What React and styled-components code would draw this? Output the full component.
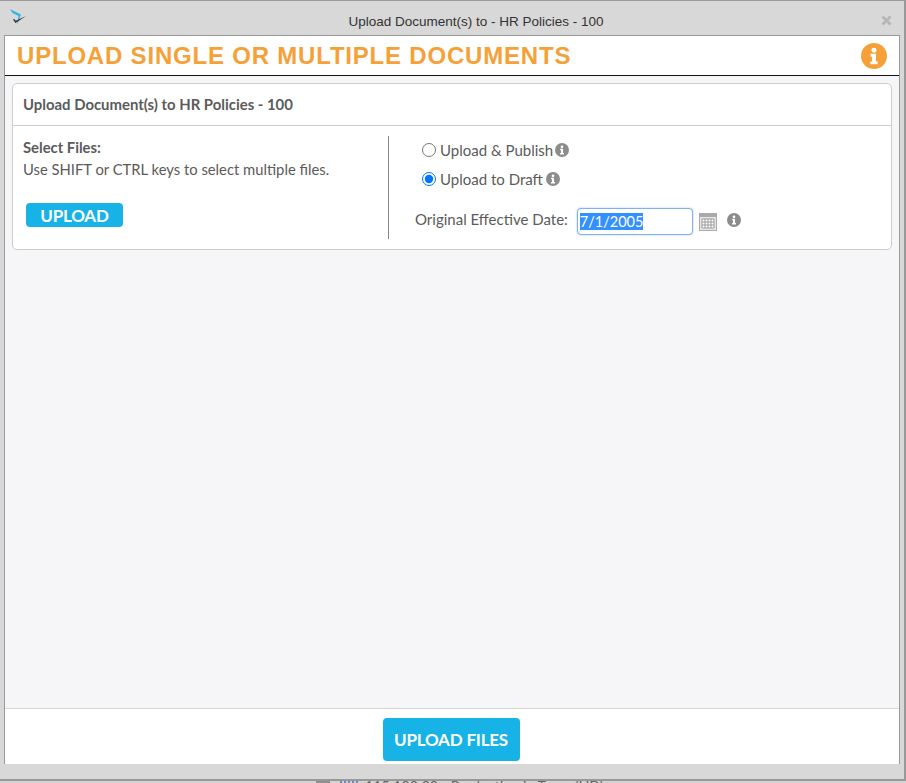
import React from 'react'
import styled, { createGlobalStyle } from 'styled-components'

const GlobalStyle = createGlobalStyle`
  html, body {
    margin: 0;
    padding: 0;
    background: #d4d4d4;
  }
  body {
    font-family: Lato, "Liberation Sans", sans-serif;
    color: #5b5b5b;
  }
`

const Page = styled.div`
  width: 906px;
  height: 783px;
  overflow: hidden;
  position: relative;
`

const Backdrop = styled.div`
  position: absolute;
  left: 316px;
  top: 777px;
  display: flex;
  align-items: flex-start;
  font-size: 14.2px;
  line-height: 18px;
  color: #666;
  white-space: nowrap;
`

const BackdropIcon = styled.svg`
  flex: none;
  margin-top: 2px;
  margin-right: ${p => p.$gap}px;
`

const Dialog = styled.div`
  box-sizing: border-box;
  width: 906px;
  height: 781px;
  position: relative;
  border-top: 1px solid #999;
  border-right: 2px solid #999;
  border-bottom: 2px solid #999;
  background: #d8d8d8;
  padding: 0 4px 15px 4px;
  display: flex;
  flex-direction: column;
`

const TitleBar = styled.div`
  height: 34px;
  flex: none;
  display: flex;
  align-items: center;
  justify-content: center;
  position: relative;
  font: 13.5px "Liberation Sans", Arial, sans-serif;
  color: #333;
  padding: 6px 0 0 48px;
  box-sizing: border-box;
`

const AppLogo = styled.svg`
  position: absolute;
  left: 5px;
  top: 7px;
`

const CloseButton = styled.svg`
  position: absolute;
  right: 8px;
  top: 14px;
`

const Body = styled.div`
  flex: 1;
  min-height: 0;
  display: flex;
  flex-direction: column;
  background: #f6f6f8;
  border: 1px solid #999;
  border-bottom: 0;
`

const Header = styled.div`
  height: 40px;
  flex: none;
  box-sizing: border-box;
  background: #fff;
  border-bottom: 1px solid #111;
  display: flex;
  align-items: center;
  justify-content: space-between;
  padding: 0 12px;
`

const Heading = styled.h1`
  margin: 0;
  font: 700 24px "Liberation Sans", Arial, sans-serif;
  letter-spacing: 0.8px;
  color: #f6a138;
`

const Content = styled.div`
  flex: 1;
  min-height: 0;
  padding: 7px 7px 0 7px;
`

const Card = styled.div`
  background: #fff;
  border: 1px solid #ccc;
  border-radius: 5px;
`

const CardTitle = styled.div`
  height: 42px;
  box-sizing: border-box;
  border-bottom: 1px solid #ccc;
  display: flex;
  align-items: center;
  padding: 0 0 2px 10px;
  font-size: 14.9px;
  font-weight: 700;
  color: #5b5b5b;
`

const CardBody = styled.div`
  display: flex;
  height: 123px;
  box-sizing: border-box;
  padding: 10px 0;
`

const LeftPane = styled.div`
  width: 376px;
  box-sizing: border-box;
  padding-left: 10px;
  border-right: 1px solid #888;
  flex: none;
`

const RightPane = styled.div`
  flex: 1;
  margin-top: -1px;
  padding-left: 33px;
`

const PaneLabel = styled.div`
  font-size: 14.8px;
  font-weight: 700;
  line-height: 21px;
  margin-top: 1px;
`

const PaneText = styled.div`
  font-size: 14.8px;
  line-height: 21px;
  padding-top: 1px;
`

const SmallButton = styled.button`
  display: block;
  margin: 23px 0 0 3px;
  width: 97px;
  height: 24px;
  border: 0;
  border-radius: 4px;
  background: #17b3e6;
  color: #fff;
  font: 700 17px Lato, sans-serif;
  letter-spacing: -0.2px;
  padding: 0;
`

const RadioRow = styled.label`
  display: flex;
  align-items: center;
  height: 29px;
  font-size: 15px;
  gap: 4px;
`

const Radio = styled.input`
  margin: 0;
  width: 14px;
  height: 14px;
`

const DateRow = styled.div`
  display: flex;
  align-items: center;
  margin: 15px 0 0 -7px;
  font-size: 15px;
`

const DateLabel = styled.span`
  padding-bottom: 5px;
`

const DateInput = styled.input`
  box-sizing: border-box;
  width: 116px;
  height: 27px;
  margin-left: 9px;
  padding: 0 2px;
  border: 1px solid #7fb2ee;
  border-radius: 4px;
  outline: none;
  box-shadow: 0 0 2px #9cc4f3;
  font: 14.5px Lato, "Liberation Sans", sans-serif;
  color: #444;
  &::selection {
    background: #3390ff;
    color: #fff;
  }
`

const CalendarIcon = styled.svg`
  margin-left: 6px;
`

const InfoDot = styled.svg`
  flex: none;
  margin-left: ${p => p.$gap || 0}px;
  margin-bottom: ${p => p.$lift || 0}px;
`

const Footer = styled.div`
  height: 56px;
  flex: none;
  box-sizing: border-box;
  background: #fff;
  border-top: 1px solid #d8d8d8;
  display: flex;
  align-items: flex-start;
  justify-content: center;
  padding: 9px 2px 0 0;
`

const PrimaryButton = styled.button`
  width: 137px;
  height: 43px;
  border: 0;
  border-radius: 4px;
  background: #17b3e6;
  color: #fff;
  font: 700 17px Lato, sans-serif;
  letter-spacing: -0.2px;
  padding: 0;
`

const InfoGlyph = ({ size, bg, gap, lift }) => (
  <InfoDot $gap={gap} $lift={lift} width={size} height={size} viewBox="0 0 24 24">
    <circle cx="12" cy="12" r="12" fill={bg} />
    <circle cx="12" cy="6.6" r="2.3" fill="#fff" />
    <path d="M8.8 10h5v7h1.6v2.6H8.6V17h1.7v-4.4H8.8z" fill="#fff" />
  </InfoDot>
)

export default function App() {
  const dateRef = React.useRef(null)
  React.useEffect(() => {
    dateRef.current?.focus()
    dateRef.current?.select()
  }, [])

  return (
    <Page>
      <GlobalStyle />
      <Backdrop>
        <BackdropIcon $gap={10} width="14" height="10" viewBox="0 0 14 10">
          <rect width="14" height="10" fill="#8f8f8f" />
        </BackdropIcon>
        <BackdropIcon $gap={5} width="20" height="10" viewBox="0 0 20 10">
          <path d="M1 0v10 M5 0v10 M9 0v10 M13 0v10 M17 0v10" stroke="#6f86b8" strokeWidth="2" />
        </BackdropIcon>
        115 100 00 - Production in Town (HD)
      </Backdrop>
      <Dialog>
        <TitleBar>
          <AppLogo width="20" height="20" viewBox="0 0 20 20">
            <path d="M1 1 L12 6.5 L8 17 L9.5 8 L3.5 5 Z" fill="#35b6e6" />
            <path d="M4 11.5 L6.5 15 L17 8 L6.8 12.8 L5.2 11 Z" fill="#333" />
          </AppLogo>
          Upload Document(s) to - HR Policies - 100
          <CloseButton width="11" height="11" viewBox="0 0 11 11">
            <path d="M1.5 1.5 L9.5 9.5 M9.5 1.5 L1.5 9.5" stroke="#b5b5b5" strokeWidth="2.6" />
          </CloseButton>
        </TitleBar>
        <Body>
          <Header>
            <Heading>UPLOAD SINGLE OR MULTIPLE DOCUMENTS</Heading>
            <InfoGlyph size={26} bg="#f6a138" />
          </Header>
          <Content>
            <Card>
              <CardTitle>Upload Document(s) to HR Policies - 100</CardTitle>
              <CardBody>
                <LeftPane>
                  <PaneLabel>Select Files:</PaneLabel>
                  <PaneText>Use SHIFT or CTRL keys to select multiple files.</PaneText>
                  <SmallButton>UPLOAD</SmallButton>
                </LeftPane>
                <RightPane>
                  <RadioRow>
                    <Radio type="radio" name="mode" />
                    Upload &amp; Publish
                    <InfoGlyph size={14} bg="#8c8c8c" gap={-2} />
                  </RadioRow>
                  <RadioRow>
                    <Radio type="radio" name="mode" defaultChecked />
                    Upload to Draft
                    <InfoGlyph size={14} bg="#8c8c8c" gap={-1} />
                  </RadioRow>
                  <DateRow>
                    <DateLabel>Original Effective Date:</DateLabel>
                    <DateInput ref={dateRef} defaultValue="7/1/2005" />
                    <CalendarIcon width="18" height="18" viewBox="0 0 18 18">
                      <rect x="0.5" y="0.5" width="17" height="17" fill="#e6e6e6" stroke="#aaa" />
                      <rect x="0.5" y="0.5" width="17" height="3.5" fill="#aaa" />
                      <path d="M3 6h12v9H3z M3 9h12 M3 12h12 M6 6v9 M9 6v9 M12 6v9" fill="#fff" stroke="#999" strokeWidth="1" />
                    </CalendarIcon>
                    <InfoGlyph size={14} bg="#8c8c8c" gap={10} lift={4} />
                  </DateRow>
                </RightPane>
              </CardBody>
            </Card>
          </Content>
          <Footer>
            <PrimaryButton>UPLOAD FILES</PrimaryButton>
          </Footer>
        </Body>
      </Dialog>
    </Page>
  )
}
